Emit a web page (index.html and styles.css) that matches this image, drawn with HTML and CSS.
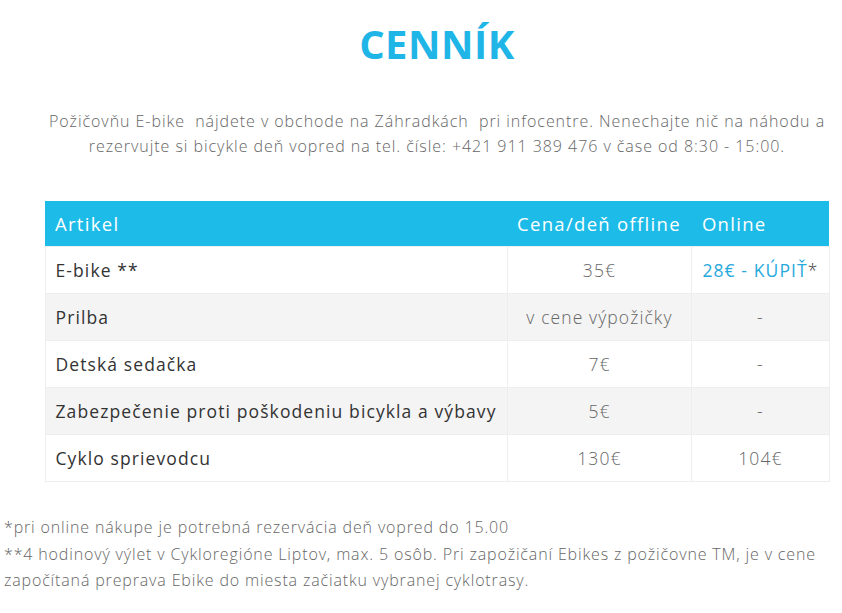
FILE: index.html
```html
<!DOCTYPE html>
<html lang="sk">
<head>
  <meta charset="UTF-8">
  <meta name="viewport" content="width=device-width, initial-scale=1.0">
  <title>Cenník</title>
  <link rel="stylesheet" href="styles.css">
</head>
<body>
  <div class="page">
    <h1 class="title">CENNÍK</h1>
    <p class="intro">
      Požičovňu E-bike&nbsp; nájdete v obchode na Záhradkách&nbsp; pri infocentre. Nenechajte nič na náhodu a<br>
      rezervujte si bicykle deň vopred na tel. čísle: +421 911 389 476 v čase od 8:30 - 15:00.
    </p>

    <table class="prices">
      <thead>
        <tr>
          <th>Artikel</th>
          <th>Cena/deň offline</th>
          <th>Online</th>
        </tr>
      </thead>
      <tbody>
        <tr>
          <td class="item">E-bike **</td>
          <td>35€</td>
          <td><a class="buy" href="#">28€ - KÚPIŤ</a><span class="star">*</span></td>
        </tr>
        <tr>
          <td class="item">Prilba</td>
          <td>v cene výpožičky</td>
          <td>-</td>
        </tr>
        <tr>
          <td class="item">Detská sedačka</td>
          <td>7€</td>
          <td>-</td>
        </tr>
        <tr>
          <td class="item">Zabezpečenie proti poškodeniu bicykla a výbavy</td>
          <td>5€</td>
          <td>-</td>
        </tr>
        <tr>
          <td class="item">Cyklo sprievodcu</td>
          <td>130€</td>
          <td>104€</td>
        </tr>
      </tbody>
    </table>

    <div class="notes">
      <p>*pri online nákupe je potrebná rezervácia deň vopred do 15.00</p>
      <p>**4 hodinový výlet v Cykloregióne Liptov, max. 5 osôb. Pri zapožičaní Ebikes z požičovne TM, je v cene<br>
        započítaná preprava Ebike do miesta začiatku vybranej cyklotrasy.</p>
    </div>
  </div>
</body>
</html>
```

FILE: styles.css
```css
body {
  margin: 0;
  background-color: #fff;
  font-family: "Open Sans", "DejaVu Sans", sans-serif;
  color: #555;
  overflow: hidden;
}
.page {
  width: 866px;
  margin-left: 4px;
}
.title {
  margin: 22px 0 0;
  text-align: center;
  font-size: 40px;
  font-weight: 700;
  letter-spacing: 0.5px;
  color: #1fb6e7;
  line-height: 44px;
}
.intro {
  margin: 43px 0 0;
  text-align: center;
  font-size: 16px;
  font-weight: 300;
  letter-spacing: 0.95px;
  white-space: nowrap;
  line-height: 25px;
  color: #666;
}
.prices {
  width: 785px;
  margin: 42px auto 0;
  border-collapse: collapse;
  font-size: 17.5px;
  letter-spacing: 1.1px;
}
.prices th {
  background-color: #1dbbe8;
  color: #fff;
  font-weight: 500;
  font-size: 18.5px;
  letter-spacing: 1.3px;
  text-align: left;
  height: 45px;
  padding: 0 10px;
}
.prices th:first-child {
  width: 442px;
}
.prices th:nth-child(2) {
  width: 165px;
}
.prices td {
  height: 46px;
  padding: 0 10px;
  border: 1px solid #eee;
  text-align: center;
  font-weight: 300;
  color: #666;
  white-space: nowrap;
}
.prices td.item {
  text-align: left;
  font-weight: 400;
  color: #333;
}
.prices tbody tr:nth-child(even) td {
  background-color: #f4f4f4;
}
.buy {
  color: #26a9dc;
  font-weight: 400;
  text-decoration: none;
}
.star {
  color: #333;
}
.notes {
  margin-top: 32px;
  font-size: 16px;
  font-weight: 300;
  letter-spacing: 0.85px;
  white-space: nowrap;
  line-height: 26.5px;
  color: #666;
}
.notes p {
  margin: 0;
}
```
